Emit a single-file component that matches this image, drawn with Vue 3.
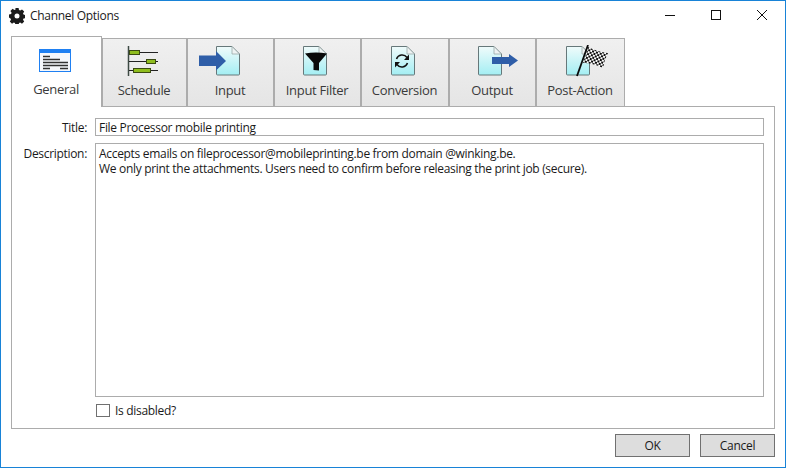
<script setup>
const tabs = [
  { id: 'general', label: 'General', width: 91 },
  { id: 'schedule', label: 'Schedule', width: 85 },
  { id: 'input', label: 'Input', width: 87 },
  { id: 'filter', label: 'Input Filter', width: 87 },
  { id: 'conversion', label: 'Conversion', width: 88 },
  { id: 'output', label: 'Output', width: 87 },
  { id: 'post', label: 'Post-Action', width: 89 }
]
const docPath = 'M18.5 1.5H34L41.5 9V29a1 1 0 0 1-1 1H19.5a1 1 0 0 1-1-1Z'
const description = 'Accepts emails on fileprocessor@mobileprinting.be from domain @winking.be.\nWe only print the attachments. Users need to confirm before releasing the print job (secure).'
</script>

<template>
  <div class="window">
    <header class="titlebar">
      <svg class="gear" width="16" height="16" viewBox="0 0 16 16">
        <path fill="#1a1a1a" fill-rule="evenodd" d="M6.400 0h3.200l.4 2.100 1.200.5 1.800-1.200 2.200 2.200-1.200 1.800.5 1.200 2.100.4v3.200l-2.100.4-.5 1.200 1.200 1.800-2.200 2.200-1.800-1.200-1.200.5-.4 2.100H6.400l-.4-2.100-1.200-.5-1.800 1.200-2.200-2.200 1.200-1.800-.5-1.200L0 9.600V6.400l2.100-.4.500-1.200-1.200-1.800 2.200-2.200 1.800 1.200 1.200-.5ZM8 5.500a2.500 2.500 0 1 0 0 5 2.500 2.500 0 0 0 0-5Z"/>
      </svg>
      <span class="title">Channel Options</span>
      <div class="controls">
        <svg width="10" height="10" viewBox="0 0 10 10"><path d="M0 5.500H10" stroke="#111" fill="none"/></svg>
        <svg width="10" height="10" viewBox="0 0 10 10"><rect x=".5" y=".5" width="9" height="9" stroke="#111" fill="none"/></svg>
        <svg width="10" height="10" viewBox="0 0 10 10"><path d="M0 0L10 10M10 0L0 10" stroke="#111" fill="none"/></svg>
      </div>
    </header>

    <nav class="tabs">
      <div
        v-for="(tab, i) in tabs"
        :key="tab.id"
        class="tab"
        :class="{ active: i === 0 }"
        :style="{ width: tab.width + 'px' }"
      >
        <svg class="icon" width="64" height="32" viewBox="0 0 64 32">
          <defs>
            <linearGradient :id="'doc-' + tab.id" x1="0" y1="0" x2="0" y2="1">
              <stop offset="0" stop-color="#f0fbfb"/>
              <stop offset="1" stop-color="#a3eef3"/>
            </linearGradient>
            <pattern v-if="tab.id === 'post'" id="check" width="4" height="4" patternUnits="userSpaceOnUse" patternTransform="rotate(17)">
              <rect width="4" height="4" fill="#fff"/>
              <rect width="2" height="2" fill="#0a0a0a"/>
              <rect x="2" y="2" width="2" height="2" fill="#0a0a0a"/>
            </pattern>
          </defs>

          <template v-if="tab.id === 'general'">
            <rect x="15" y="4" width="32" height="23" fill="#1f80f2"/>
            <rect x="16" y="8" width="30" height="18" fill="#f6f8fc"/>
            <path d="M19 11.500h7M19 14.500h17M19 17.500h25M19 20.500h25M19 23.500h7M36 23.500h8" stroke="#333" stroke-width="1.400" fill="none"/>
          </template>

          <template v-else-if="tab.id === 'schedule'">
            <path d="M16.500 1V31" stroke="#3d4a44" stroke-width="1.500"/>
            <path d="M17 7.500H46M17 16.500H46M17 25.500H46" stroke="#222" fill="none"/>
            <rect x="17.500" y="5.500" width="10" height="4" fill="#8fbd1e" stroke="#3b4b12"/>
            <rect x="34.500" y="14.500" width="9" height="4" fill="#8fbd1e" stroke="#3b4b12"/>
            <rect x="21.500" y="23.500" width="17" height="4" fill="#8fbd1e" stroke="#3b4b12"/>
          </template>

          <template v-else>
            <path :d="docPath" :fill="'url(#doc-' + tab.id + ')'" stroke="#66787a"/>
            <path d="M34 1.500V9H41.500Z" fill="#eef3f3" stroke="#9aa8a8" stroke-width=".8"/>
          </template>

          <path v-if="tab.id === 'input'" d="M0 10.500H17V6L27 16 17 25.500V21H0Z" transform="translate(1 0)" fill="#2f5ea8"/>
          <path v-if="tab.id === 'filter'" d="M20 8.500Q31 6.500 42 8.500L34 18V25.500L28.500 25V18Z" fill="#0a0a0a"/>
          <g v-if="tab.id === 'conversion'" fill="none" stroke="#111" stroke-width="1.500">
            <path d="M23.500 14A6 6 0 0 1 34 12.500"/>
            <path d="M34.500 18A6 6 0 0 1 24 19.500"/>
            <path d="M36 9.500V15H31Z" fill="#111" stroke="none"/>
            <path d="M22 22.500V17H27Z" fill="#111" stroke="none"/>
          </g>
          <path v-if="tab.id === 'output'" d="M32 12H49V9L58 15.500 49 22V19H32Z" fill="#2f5ea8"/>
          <g v-if="tab.id === 'post'">
            <path d="M40 2Q50 7 60 8Q56 15 55 23Q45 18 35 18Q38 10 40 2Z" fill="url(#check)"/>
            <path d="M29 31L40 0" stroke="#0a0a0a" stroke-width="1.800"/>
          </g>
        </svg>
        <span class="tab-label">{{ tab.label }}</span>
      </div>
    </nav>

    <section class="panel">
      <label class="field-label title-label">Title:</label>
      <div class="box title-box">File Processor mobile printing</div>
      <label class="field-label desc-label">Description:</label>
      <div class="box desc-box">{{ description }}</div>
      <label class="check">
        <span class="checkbox"></span>
        <span>Is disabled?</span>
      </label>
    </section>

    <footer class="footer">
      <button class="btn">OK</button>
      <button class="btn">Cancel</button>
    </footer>
  </div>
</template>

<style>
html, body { margin: 0; background: #fff; }
</style>

<style scoped>
.window {
  box-sizing: border-box;
  width: 786px;
  height: 468px;
  border: 1px solid #1883d7;
  background: #fff;
  font-family: "Open Sans", "Noto Sans", sans-serif;
  font-size: 12px;
  color: #1a1a1a;
  overflow: hidden;
}
.titlebar {
  box-sizing: border-box;
  height: 35px;
  display: flex;
  align-items: flex-start;
  padding: 7px 18px 0 8px;
}
.gear { margin-right: 5px; }
.title { letter-spacing: -.3px; line-height: 16px; }
.controls {
  margin-left: auto;
  margin-top: 2px;
  display: flex;
  gap: 36px;
}
.tabs {
  display: flex;
  align-items: flex-end;
  height: 70px;
  margin-left: 10px;
}
.tab {
  box-sizing: border-box;
  height: 69px;
  margin-bottom: -1px;
  display: flex;
  flex-direction: column;
  align-items: center;
  border: 1px solid #acacac;
  background: linear-gradient(#f0f0f0, #e5e5e5);
  padding-top: 6px;
  position: relative;
}
.tab.active {
  height: 71px;
  padding-top: 8px;
  background: #fff;
  border-bottom: none;
  z-index: 1;
}
.icon { flex: none; margin-right: 1px; }
.tab-label {
  font-size: 13px;
  line-height: 18px;
  margin-top: 4px;
  color: #3a3a3a;
  letter-spacing: -.3px;
  white-space: nowrap;
  margin-right: 1px;
}
.tab.active .tab-label { margin-top: 3px; }
.panel {
  box-sizing: border-box;
  margin-left: 10px;
  width: 764px;
  height: 323px;
  border: 1px solid #acacac;
  display: grid;
  grid-template-columns: 75px 669px;
  grid-template-rows: 18px 254px 20px;
  column-gap: 8px;
  row-gap: 7px;
  padding-top: 11px;
  letter-spacing: -.31px;
}
.field-label {
  text-align: right;
  line-height: 18px;
}
.title-label { padding-top: 1px; }
.desc-label { padding-top: 2px; }
.box {
  box-sizing: border-box;
  border: 1px solid #acacac;
  padding: 0 3px;
  white-space: pre-wrap;
}
.title-box { line-height: 16px; padding-top: 1px; }
.desc-box { padding-top: 2px; line-height: 15px; }
.check {
  grid-column: 2;
  display: flex;
  align-items: flex-start;
  gap: 5px;
  margin-left: 1px;
  height: 20px;
  line-height: 14px;
}
.checkbox {
  box-sizing: border-box;
  width: 14px;
  height: 13px;
  border: 1px solid #707070;
}
.footer {
  display: flex;
  justify-content: flex-end;
  gap: 10px;
  margin: 5px 10px 0 0;
}
.btn {
  box-sizing: border-box;
  width: 75px;
  height: 23px;
  border: 1px solid #707070;
  background: #dddddd;
  font: inherit;
  letter-spacing: -.3px;
  color: #1a1a1a;
  padding: 0;
}
</style>
